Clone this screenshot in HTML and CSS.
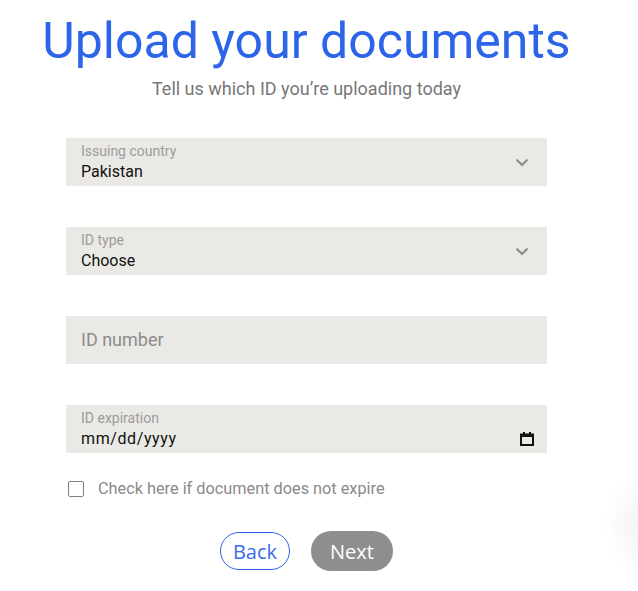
FILE: index.html
```html
<!DOCTYPE html>
<html lang="en">
<head>
<meta charset="utf-8">
<title>Upload your documents</title>
<link rel="stylesheet" href="styles.css">
</head>
<body>
<main class="page">
  <h1 class="title">Upload your documents</h1>
  <p class="subtitle">Tell us which ID you’re uploading today</p>

  <form class="form">
    <label class="field field-select">
      <span class="field-label">Issuing country</span>
      <span class="field-value">Pakistan</span>
      <svg class="chevron" width="14" height="9" viewBox="0 0 14 9"><path d="M1.5 1.5 L7 7 L12.5 1.5" fill="none" stroke="#8a8a8a" stroke-width="2"/></svg>
    </label>

    <label class="field field-select">
      <span class="field-label">ID type</span>
      <span class="field-value">Choose</span>
      <svg class="chevron" width="14" height="9" viewBox="0 0 14 9"><path d="M1.5 1.5 L7 7 L12.5 1.5" fill="none" stroke="#8a8a8a" stroke-width="2"/></svg>
    </label>

    <label class="field field-text">
      <span class="placeholder">ID number</span>
    </label>

    <label class="field field-date">
      <span class="field-label">ID expiration</span>
      <span class="date-row">
        <span class="field-value">mm/dd/yyyy</span>
        <svg class="calendar" width="14" height="14" viewBox="0 0 14 14"><rect x="1" y="2.5" width="12" height="10.5" fill="none" stroke="#111" stroke-width="2"/><rect x="1" y="2" width="12" height="3" fill="#111"/><rect x="3" y="0" width="2" height="3" fill="#111"/><rect x="9" y="0" width="2" height="3" fill="#111"/></svg>
      </span>
    </label>

    <label class="check">
      <span class="box"></span>
      <span class="check-text">Check here if document does not expire</span>
    </label>

    <div class="actions">
      <button type="button" class="btn btn-back">Back</button>
      <button type="button" class="btn btn-next">Next</button>
    </div>
  </form>
  <div class="floating"></div>
</main>
</body>
</html>
```
FILE: styles.css
```css
html, body {
  margin: 0;
  padding: 0;
  background: #ffffff;
  overflow: hidden;
}
body {
  font-family: Roboto, "Liberation Sans", sans-serif;
  width: 638px;
  height: 591px;
  position: relative;
}
.page {
  width: 613px;
  text-align: center;
}
.title {
  margin: 0;
  padding-top: 11px;
  font-family: Roboto, sans-serif;
  font-weight: 400;
  font-size: 50px;
  line-height: 60px;
  color: #2d65e8;
}
.subtitle {
  margin: 7px 0 0;
  font-size: 18px;
  line-height: 22px;
  color: #777777;
}
.form {
  width: 481px;
  margin: 38px auto 0;
  text-align: left;
  display: flex;
  flex-direction: column;
  gap: 41px;
}
.field {
  position: relative;
  display: flex;
  flex-direction: column;
  justify-content: flex-start;
  height: 48px;
  box-sizing: border-box;
  padding: 5px 15px 0;
  background: #ebe9e5;
}
.field-label {
  font-size: 14px;
  line-height: 17px;
  color: #9b9b9b;
}
.field-value {
  font-size: 16px;
  line-height: 24px;
  color: #111111;
}
.field-select .chevron {
  position: absolute;
  right: 18px;
  top: 20px;
}
.field-text {
  justify-content: center;
  padding-top: 0;
}
.placeholder {
  font-size: 18px;
  line-height: 22px;
  color: #8c8c8c;
}
.date-row {
  display: flex;
  align-items: center;
  justify-content: space-between;
}
.date-row .field-value {
  letter-spacing: 0.6px;
}
.calendar {
  margin-right: -2px;
}
.check {
  display: flex;
  align-items: center;
  gap: 14px;
  margin-top: -15px;
  padding-left: 2px;
}
.box {
  width: 14px;
  height: 14px;
  border: 1.5px solid #808080;
  border-radius: 2px;
  background: #fff;
}
.check-text {
  font-size: 16.3px;
  line-height: 20px;
  color: #8a8a8a;
}
.actions {
  display: flex;
  justify-content: center;
  align-items: center;
  gap: 21px;
  margin-top: -9px;
}
.btn {
  font-family: "Open Sans", sans-serif;
  font-size: 20px;
  border-radius: 20px;
  cursor: pointer;
}
.btn-back {
  width: 70px;
  height: 38px;
  background: #fff;
  border: 1px solid #2d65e8;
  color: #3a6bea;
  padding: 0;
}
.btn-next {
  width: 82px;
  height: 40px;
  background: #8e8e8e;
  border: none;
  color: #ffffff;
  padding: 0;
}
.floating {
  position: absolute;
  right: 0;
  top: 470px;
  width: 34px;
  height: 110px;
  background: radial-gradient(ellipse 34px 50px at 100% 50%, rgba(0, 0, 0, 0.045), rgba(0, 0, 0, 0));
}
```
